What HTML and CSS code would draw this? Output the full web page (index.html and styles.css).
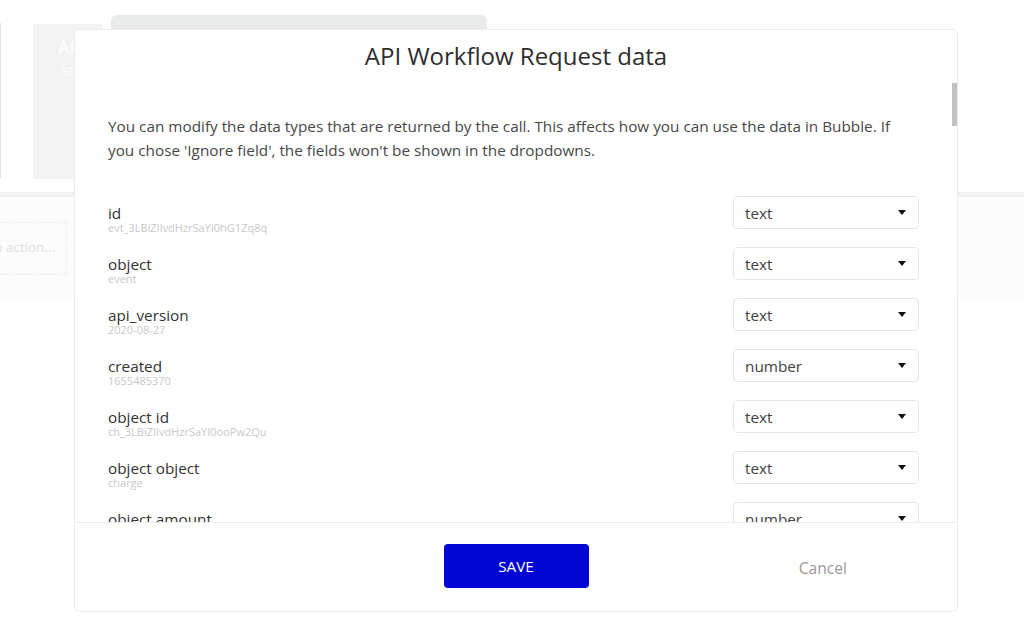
FILE: index.html
```html
<!DOCTYPE html>
<html>
<head>
<meta charset="utf-8">
<link rel="stylesheet" href="styles.css">
</head>
<body>
<div class="page">
  <div class="top-zone">
    <div class="stub"></div>
    <div class="event-card">
      <div class="event-title">API Event</div>
      <div class="event-sub">stripe</div>
    </div>
    <div class="top-box"></div>
  </div>
  <div class="band">
    <div class="action-box"><span>Click here to add an action...</span></div>
  </div>
</div>

<div class="modal">
  <div class="modal-header">API Workflow Request data</div>
  <div class="modal-body">
    <p class="desc">You can modify the data types that are returned by the call. This affects how you can use the data in Bubble. If you chose 'Ignore field', the fields won't be shown in the dropdowns.</p>
    <div class="row">
      <div class="field"><div class="label">id</div><div class="sub">evt_3LBiZIlvdHzrSaYI0hG1Zq8q</div></div>
      <div class="select"><span>text</span><i class="caret"></i></div>
    </div>
    <div class="row">
      <div class="field"><div class="label">object</div><div class="sub">event</div></div>
      <div class="select"><span>text</span><i class="caret"></i></div>
    </div>
    <div class="row">
      <div class="field"><div class="label">api_version</div><div class="sub">2020-08-27</div></div>
      <div class="select"><span>text</span><i class="caret"></i></div>
    </div>
    <div class="row">
      <div class="field"><div class="label">created</div><div class="sub">1655485370</div></div>
      <div class="select"><span>number</span><i class="caret"></i></div>
    </div>
    <div class="row">
      <div class="field"><div class="label">object id</div><div class="sub">ch_3LBiZIlvdHzrSaYI0ooPw2Qu</div></div>
      <div class="select"><span>text</span><i class="caret"></i></div>
    </div>
    <div class="row">
      <div class="field"><div class="label">object object</div><div class="sub">charge</div></div>
      <div class="select"><span>text</span><i class="caret"></i></div>
    </div>
    <div class="row">
      <div class="field"><div class="label">object amount</div><div class="sub">2000</div></div>
      <div class="select"><span>number</span><i class="caret"></i></div>
    </div>
    <div class="row">
      <div class="field"><div class="label">object amount_captured</div><div class="sub">2000</div></div>
      <div class="select"><span>number</span><i class="caret"></i></div>
    </div>
  </div>
  <div class="modal-footer">
    <div></div>
    <button class="save">SAVE</button>
    <div class="cancel">Cancel</div>
  </div>
  <div class="thumb"></div>
</div>
</body>
</html>
```

FILE: styles.css
```css
* { box-sizing: border-box; }
html, body {
  margin: 0;
  padding: 0;
  background: #ffffff;
  font-family: "Open Sans", "Liberation Sans", sans-serif;
}
.page {
  width: 1024px;
  height: 632px;
  overflow: hidden;
}
.top-zone {
  height: 192px;
  display: flex;
  align-items: flex-start;
  padding-top: 15px;
}
.stub {
  width: 1px;
  height: 155px;
  margin-top: 8px;
  background: #e4e4e4;
}
.event-card {
  width: 70px;
  height: 155px;
  margin-top: 9px;
  margin-left: 32px;
  background: #f3f3f3;
  color: #ffffff;
  padding-left: 25px;
  padding-top: 10px;
  overflow: hidden;
  white-space: nowrap;
}
.event-title { font-size: 18px; line-height: 26px; }
.event-sub { font-size: 13px; line-height: 20px; padding-left: 4px; }
.top-box {
  width: 376px;
  height: 60px;
  margin-left: 8px;
  background: #eaebeb;
  border-radius: 6px;
}
.band {
  height: 108px;
  border-top: 5px solid #f3f3f3;
  background: #fcfcfc;
  padding-top: 25px;
}
.action-box {
  width: 67px;
  height: 53px;
  border: 1px dashed #eeeeee;
  border-left: none;
  display: flex;
  align-items: center;
  justify-content: flex-end;
  overflow: hidden;
  white-space: nowrap;
  padding-right: 11px;
  padding-bottom: 4px;
  color: #dddddd;
  font-size: 13.5px;
}

.modal {
  position: absolute;
  left: 74px;
  top: 29px;
  width: 884px;
  height: 583px;
  background: #ffffff;
  border: 1px solid #ececec;
  border-radius: 5px;
  display: flex;
  flex-direction: column;
}
.modal-header {
  height: 42px;
  flex: none;
  padding-top: 11px;
  text-align: center;
  font-size: 24px;
  line-height: 30px;
  color: #2e2e2e;
}
.modal-body {
  height: 450px;
  flex: none;
  overflow: hidden;
  padding: 42px 38px 0 33px;
}
.desc {
  margin: 0 0 34px 0;
  font-size: 15.3px;
  line-height: 24px;
  color: #474747;
}
.row {
  display: flex;
  justify-content: space-between;
  align-items: flex-start;
  height: 33px;
  margin-bottom: 18px;
}
.field { padding-top: 8px; }
.label {
  font-size: 15.3px;
  line-height: 18px;
  color: #333333;
  white-space: nowrap;
}
.sub {
  font-size: 11px;
  line-height: 11px;
  color: #c8c8c8;
  white-space: nowrap;
}
.select {
  width: 186px;
  height: 33px;
  border: 1px solid #e6e6e6;
  border-radius: 4px;
  display: flex;
  align-items: center;
  justify-content: space-between;
  padding: 0 12px 0 11px;
  font-size: 15.3px;
  color: #424242;
}
.caret {
  width: 0;
  height: 0;
  border-left: 4.5px solid transparent;
  border-right: 4.5px solid transparent;
  border-top: 5px solid #111111;
  margin-top: -1px;
}
.modal-footer {
  height: 89px;
  flex: none;
  border-top: 1px solid #eeeeee;
  display: grid;
  grid-template-columns: 1fr 145px 1fr;
  align-items: center;
}
.save {
  width: 145px;
  height: 44px;
  border: none;
  border-radius: 4px;
  background: #0205d3;
  color: #ffffff;
  font-family: "Open Sans", "Liberation Sans", sans-serif;
  font-size: 15.3px;
  padding: 0;
  margin-top: -2px;
}
.cancel {
  justify-self: end;
  margin-right: 110px;
  margin-top: 2px;
  font-size: 15.6px;
  color: #999999;
}
.thumb {
  position: absolute;
  right: 0;
  top: 53px;
  width: 5px;
  height: 43px;
  background: #c1c1c1;
}
```
